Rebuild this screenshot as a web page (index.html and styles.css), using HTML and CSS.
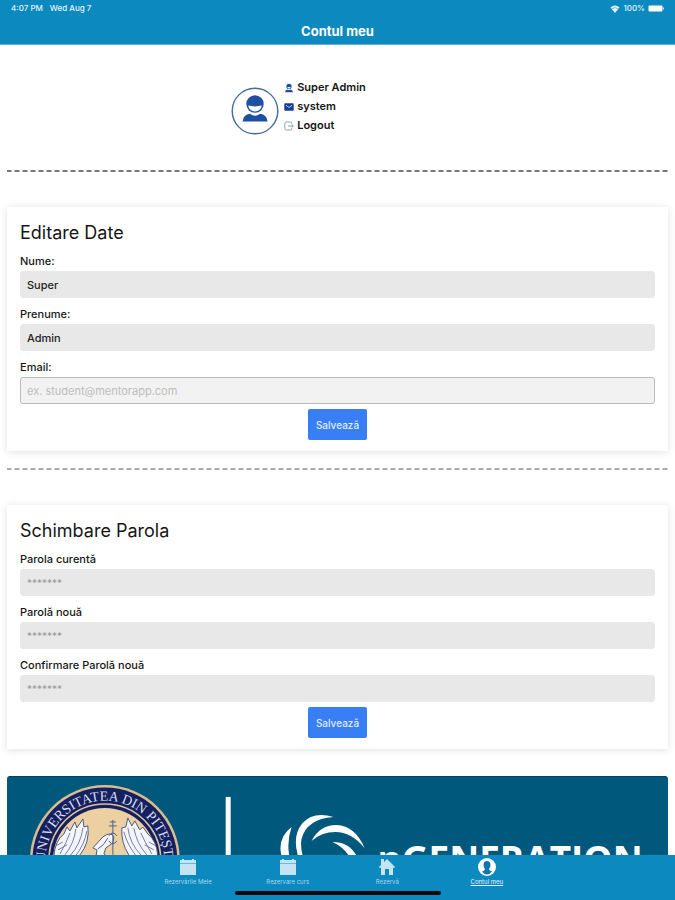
FILE: index.html
```
<!DOCTYPE html>
<html lang="ro">
<head>
    <meta charset="UTF-8">
    <meta name="viewport" content="width=device-width, initial-scale=1.0">
    <title>Contul meu</title>
    <link rel="stylesheet" href="styles.css">
</head>
<body>
    <header class="header">
        <div class="status-bar">
            <div class="status-group">
                <span>4:07 PM</span>
                <span>Wed Aug 7</span>
            </div>
            <div class="status-right">
                <svg class="wifi" viewBox="0 0 10 8" aria-hidden="true">
                    <path d="M0.5 2.6Q5 -1.4 9.5 2.6L5 8z" fill="#e4f3fa"/>
                    <path d="M1.6 3.9Q5 1.2 8.4 3.9" fill="none" stroke="#0c8abf" stroke-width="0.5"/>
                </svg>
                <span>100%</span>
                <svg class="battery" viewBox="0 0 17 7" aria-hidden="true">
                    <rect x="0.5" y="0.5" width="14" height="6" rx="1" fill="#fff"/>
                    <path d="M15.5 2.5v2" stroke="#b6dcee"/>
                </svg>
            </div>
        </div>
        <h1>Contul meu</h1>
    </header>

    <main class="content">
        <section class="profile">
            <svg class="avatar" viewBox="0 0 48 48" role="img" aria-label="Avatar">
                <circle cx="24" cy="24" r="22.8" fill="#fff" stroke="#466c9f" stroke-width="1.4"/>
                <circle cx="24" cy="17" r="8.7" fill="#1e4fa3"/>
                <path d="M17.2 18.6Q24 20.2 30.8 18.6Q30 24.300 24 24.500Q18 24.300 17.2 18.6z" fill="#fff"/>
                <path d="M11.6 34.5Q12 27.8 19 26.8Q24 30.8 29 26.8Q36 27.8 36.6 34.5z" fill="#1e4fa3"/>
            </svg>
            <ul class="profile-list">
                <li>
                    <svg viewBox="0 0 10 10" aria-hidden="true">
                        <circle cx="5" cy="3.4" r="2.6" fill="#1e4fa3"/>
                        <path d="M3.4 4h3.2Q6.3 5.5 5 5.5T3.4 4z" fill="#fff"/>
                        <path d="M1 9.2Q1.2 6.7 3.6 6.4Q5 7.5 6.4 6.4Q8.8 6.7 9 9.2z" fill="#1e4fa3"/>
                    </svg>
                    <span>Super Admin</span>
                </li>
                <li>
                    <svg viewBox="0 0 10 10" aria-hidden="true">
                        <rect x="0.3" y="1.3" width="9.4" height="7.5" rx="0.8" fill="#173f93"/>
                        <path d="M2 3.3L5 5.5L8 3.3" fill="none" stroke="#c9d5ec" stroke-width="0.9"/>
                    </svg>
                    <span>system</span>
                </li>
                <li>
                    <svg viewBox="0 0 10 10" fill="none" stroke="#6f8f97" stroke-width="0.8" aria-hidden="true">
                        <path d="M7.8 2.8V2Q7.8 1 6.8 1H2.6Q0.8 1 0.8 2.8V7.2Q0.8 9 2.6 9H6.8Q7.8 9 7.8 8V7.2M4 5H9.3M7.6 3.5L9.3 5L7.6 6.5"/>
                    </svg>
                    <a href="#logout">Logout</a>
                </li>
            </ul>
        </section>

        <hr class="divider">

        <form class="card">
            <h2>Editare Date</h2>
            <div class="field">
                <label for="nume">Nume:</label>
                <input type="text" id="nume" value="Super">
            </div>
            <div class="field">
                <label for="prenume">Prenume:</label>
                <input type="text" id="prenume" value="Admin">
            </div>
            <div class="field">
                <label for="email">Email:</label>
                <input type="email" id="email" class="outlined" placeholder="ex. student@mentorapp.com">
            </div>
            <button type="button" class="save-btn">Salvează</button>
        </form>

        <hr class="divider light">

        <form class="card">
            <h2>Schimbare Parola</h2>
            <div class="field">
                <label for="parola">Parola curentă</label>
                <input type="password" id="parola" placeholder="*******">
            </div>
            <div class="field">
                <label for="parolaNoua">Parolă nouă</label>
                <input type="password" id="parolaNoua" placeholder="*******">
            </div>
            <div class="field">
                <label for="confirmare">Confirmare Parolă nouă</label>
                <input type="password" id="confirmare" placeholder="*******">
            </div>
            <button type="button" class="save-btn">Salvează</button>
        </form>

        <svg class="banner" viewBox="0 0 662 168" role="img" aria-label="Universitatea din Pitești, nGeneration">
            <defs>
                <path id="sealText" d="M46.5 114A59.5 59.5 0 1 1 149.5 114"/>
            </defs>
            <rect width="662" height="168" rx="3" fill="#00587d"/>
            <path d="M2 0.5H660" stroke="#00406a"/>

            <!-- seal -->
            <circle cx="98" cy="84" r="75" fill="#d9bd91"/>
            <circle cx="98" cy="84" r="72.5" fill="#15205f"/>
            <circle cx="98" cy="84" r="56" fill="none" stroke="#d9c39f" stroke-width="1.5"/>
            <circle cx="98" cy="84" r="52" fill="#ecd0a2"/>
            <text class="seal-text" text-anchor="middle"><textPath href="#sealText" startOffset="50%">UNIVERSITATEA DIN PITEȘTI</textPath></text>
            <g fill="#f4f5fa" stroke="#4d5b82" stroke-width="1">
                <path d="M47 80Q48 65 57 58L60 51L63 55L68 46L70 52L76 43L77 51L81 50Q83 67 73 79L66 90H46z"/>
                <path d="M151 80Q150 65 141 58L136 51L133 54L128 45L125 50L121 42L119 51L115 52Q114 67 122 79L130 90H152z"/>
                <path d="M88 90L90 74L86 72L96 61Q104 55 107 61L106 67L99 72L97 78L102 82L107 90z"/>
            </g>
            <g fill="none" stroke="#7281a5" stroke-width="1">
                <path d="M53 78Q60 66 63 57M58 79Q67 68 69 53M63 80Q74 68 76 52M68 81Q78 68 80 55M49 70L56 66M51 74L60 69"/>
                <path d="M145 78Q138 66 134 57M140 79Q130 68 127 52M135 80Q123 68 121 52M130 81Q120 68 117 56M149 70L142 66M147 74L138 69"/>
                <path d="M91 73Q97 70 101 62M106 44V79M102 50H110M103 46H109M102 60Q106 54 110 60M102 65Q106 71 110 65" stroke="#53618b"/>
            </g>

            <rect x="219" y="21" width="5" height="126" fill="#fff"/>

            <!-- swirl -->
            <g fill="#fff">
                <path d="M285 51Q269 63 276 84Q280 97 292 104Q276 77 285 51z"/>
                <path d="M327 41Q307 35 296 47Q285 60 292 82Q296 94 306 101Q292 78 295 63Q300 43 327 41z"/>
                <path d="M305 65Q313 49 330 49Q349 50 358 72Q345 56 329 56Q315 56 305 65z"/>
                <path d="M326 66Q345 66 352 84Q357 97 350 110Q350 77 326 66z"/>
            </g>
            <text class="banner-text" x="371" y="97">nGENERATION</text>
        </svg>
    </main>

    <footer class="tab-bar">
        <nav class="tabs">
            <a href="#rezervari">
                <svg viewBox="0 0 18 18" fill="#c5e4f3" aria-hidden="true">
                    <path d="M1 2h2V1h2V2h8V1h2V2h2v3H1zM1 5.500h16v11.500H1z"/>
                </svg>
                <span>Rezervările Mele</span>
            </a>
            <a href="#curs">
                <svg viewBox="0 0 18 18" fill="#c5e4f3" aria-hidden="true">
                    <path d="M1 2h2V1h2V2h8V1h2V2h2v3H1zM1 5.500h16v11.500H1z"/>
                </svg>
                <span>Rezervare curs</span>
            </a>
            <a href="#rezerva">
                <svg viewBox="0 0 18 18" fill="#c5e4f3" aria-hidden="true">
                    <path d="M3 1h3v3l3-3l8 8l-1 1l-1-0.5V17h-4v-6H7v6H3V9.5L1.5 10L1 9l2-2z"/>
                </svg>
                <span>Rezervă</span>
            </a>
            <a href="#cont" class="active">
                <svg viewBox="0 0 18 18" aria-hidden="true">
                    <circle cx="9" cy="9" r="9" fill="#fff"/>
                    <path d="M9 3Q12.5 3 12.5 6.8Q12.5 9.5 11 11Q11 12.5 14 13.5Q12 16.5 9 16.5T4 13.5Q7 12.5 7 11Q5.5 9.5 5.5 6.8Q5.5 3 9 3z" fill="#0c76ad"/>
                </svg>
                <span>Contul meu</span>
            </a>
        </nav>
        <div class="home-indicator"></div>
    </footer>
</body>
</html>
```
FILE: styles.css
```
:root {
    --bar-color: #0c8abf;
    --button-color: #387ff5;
    --field-color: #e8e8e8;
    --text-color: #161616;
}

* {
    box-sizing: border-box;
}

body {
    margin: 0;
    height: 100vh;
    display: flex;
    flex-direction: column;
    background: #fff;
    color: var(--text-color);
    font-family: Inter, "Liberation Sans", sans-serif;
    font-size: 11px;
}

a {
    color: inherit;
    text-decoration: none;
}

.header {
    flex: none;
    background: var(--bar-color);
    border-bottom: 1px solid #62b2d6;
    color: #fff;
}

.status-bar {
    display: flex;
    justify-content: space-between;
    padding: 3px 10px 0 11px;
    font-size: 8px;
    font-weight: 500;
    line-height: 11px;
    color: #e4f3fa;
}

.status-group {
    display: flex;
    gap: 7px;
}

.status-right {
    display: flex;
    align-items: center;
    gap: 3px;
}

.wifi {
    width: 10px;
    height: 8px;
}

.battery {
    width: 17px;
    height: 7px;
}

.header h1 {
    margin: 0;
    padding: 9px 0 4px;
    font-size: 13px;
    font-weight: 700;
    line-height: 17px;
    text-align: center;
}

.content {
    flex: 1;
    min-height: 0;
    overflow-y: auto;
    scrollbar-width: none;
    padding: 0 7px;
}

.profile {
    display: flex;
    justify-content: center;
    align-items: flex-end;
    gap: 5px;
    padding: 33px 78px 35px 0;
}

.avatar {
    width: 48px;
    height: 48px;
}

.profile-list {
    list-style: none;
    margin: 0;
    padding: 0;
    font-size: 11px;
    font-weight: 600;
    line-height: 19px;
}

.profile-list li {
    display: flex;
    align-items: center;
    gap: 3px;
}

.profile-list svg {
    width: 10px;
    height: 10px;
}

.divider {
    height: 2px;
    margin: 0;
    border: 0;
    background: repeating-linear-gradient(90deg, #777 0 4px, transparent 5px 7px, #777 8px);
}

.divider.light {
    margin-top: 17px;
    background: repeating-linear-gradient(90deg, #aaa 0 4px, transparent 5px 7px, #aaa 8px);
}

.card {
    margin-top: 35px;
    padding: 13px 13px 11px;
    background: #fff;
    box-shadow: 0 1px 8px rgba(0, 0, 0, 0.12);
}

.card h2 {
    margin: 0;
    padding: 1px 0 9px;
    font-size: 18px;
    font-weight: 400;
    line-height: 24px;
}

.field {
    margin-bottom: 9px;
}

.field label {
    display: block;
    margin-bottom: 3px;
    font-size: 11px;
    font-weight: 500;
    line-height: 14px;
}

.field input {
    display: block;
    width: 100%;
    height: 27px;
    padding: 0 6px;
    border: 1px solid var(--field-color);
    border-radius: 3px;
    background: var(--field-color);
    color: #222;
    font-family: inherit;
    font-size: 11px;
    font-weight: 500;
}

.field input.outlined {
    border-color: #bbb;
    background: #f2f2f2;
}

.field input::placeholder {
    color: #bdbdbd;
    font-weight: 400;
}

.field input[type="password"] {
    font-size: 10px;
}

.field input[type="password"]::placeholder {
    color: #999;
}

.save-btn {
    display: block;
    margin: -4px auto 0;
    height: 31px;
    padding: 0 8px;
    border: 0;
    border-radius: 2px;
    background: var(--button-color);
    color: #e2edff;
    font-family: inherit;
    font-size: 10px;
    font-weight: 500;
}

.banner {
    display: block;
    width: 100%;
    margin-top: 27px;
}

.seal-text {
    fill: #d5dcf0;
    font-family: "Liberation Serif", serif;
    font-size: 14px;
}

.banner-text {
    fill: #fff;
    font-family: "Open Sans", sans-serif;
    font-size: 37px;
    font-weight: 700;
}

.tab-bar {
    flex: none;
    padding: 3px 0 5px;
    background: var(--bar-color);
}

.tabs {
    display: grid;
    grid-template-columns: repeat(4, 1fr);
    width: 59%;
    margin: 0 auto;
    color: #a9d7ed;
    font-size: 6px;
    line-height: 8px;
}

.tabs a {
    display: flex;
    flex-direction: column;
    align-items: center;
    gap: 2px;
}

.tabs svg {
    width: 18px;
    height: 18px;
}

.tabs .active {
    color: #e6f5fc;
    text-decoration: underline;
}

.home-indicator {
    width: 206px;
    height: 4px;
    margin: 5px auto 0;
    border-radius: 2px;
    background: #05080c;
}
```
